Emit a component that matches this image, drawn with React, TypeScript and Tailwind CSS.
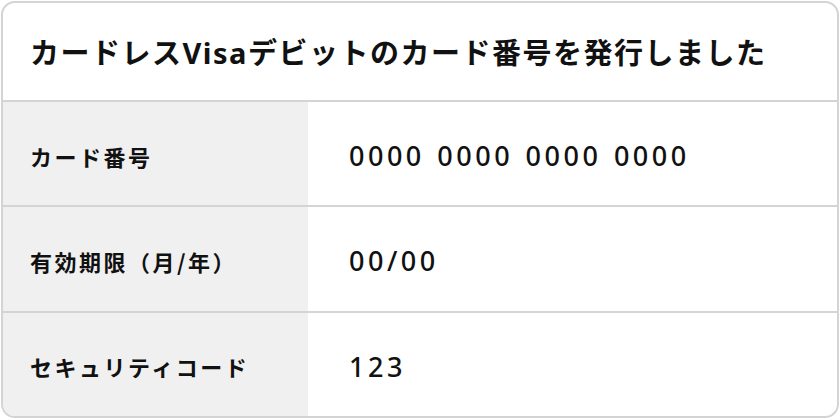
const rows = [
  { label: "カード番号", value: "0000 0000 0000 0000" },
  { label: "有効期限（月/年）", value: "00/00" },
  { label: "セキュリティコード", value: "123" },
];

export default function App() {
  return (
    <div className="w-[840px] h-[420px] bg-white p-px font-['Noto_Sans','Noto_Sans_CJK_JP',sans-serif] text-[#111]">
      <div className="h-[417px] flex flex-col border-2 border-[#d4d4d4] rounded-[14px] overflow-hidden">
        <div className="h-[99px] shrink-0 flex items-center px-[27px] pt-[2px] border-b-2 border-[#d4d4d4]">
          <h1 className="text-[29px] font-bold tracking-[1.5px] font-['Noto_Sans_CJK_JP',sans-serif]">
            カードレス<span className="font-['Noto_Sans',sans-serif]">Visa</span>デビットのカード番号を発行しました
          </h1>
        </div>
        {rows.map((row, i) => (
          <div
            key={row.label}
            className={
              "flex-1 grid grid-cols-[305px_1fr]" +
              (i < rows.length - 1 ? " border-b-2 border-[#d4d4d4]" : "")
            }
          >
            <div className="bg-[#f0f0f0] flex items-center pl-[27px] pt-[5px] text-[22px] font-bold tracking-[2.5px] font-['Noto_Sans_CJK_JP',sans-serif]">
              {row.label}
            </div>
            <div className="flex items-center pl-[41px] pt-[5px] text-[27px] font-medium tracking-[3.5px] [word-spacing:2px]">
              {row.value}
            </div>
          </div>
        ))}
      </div>
    </div>
  );
}
